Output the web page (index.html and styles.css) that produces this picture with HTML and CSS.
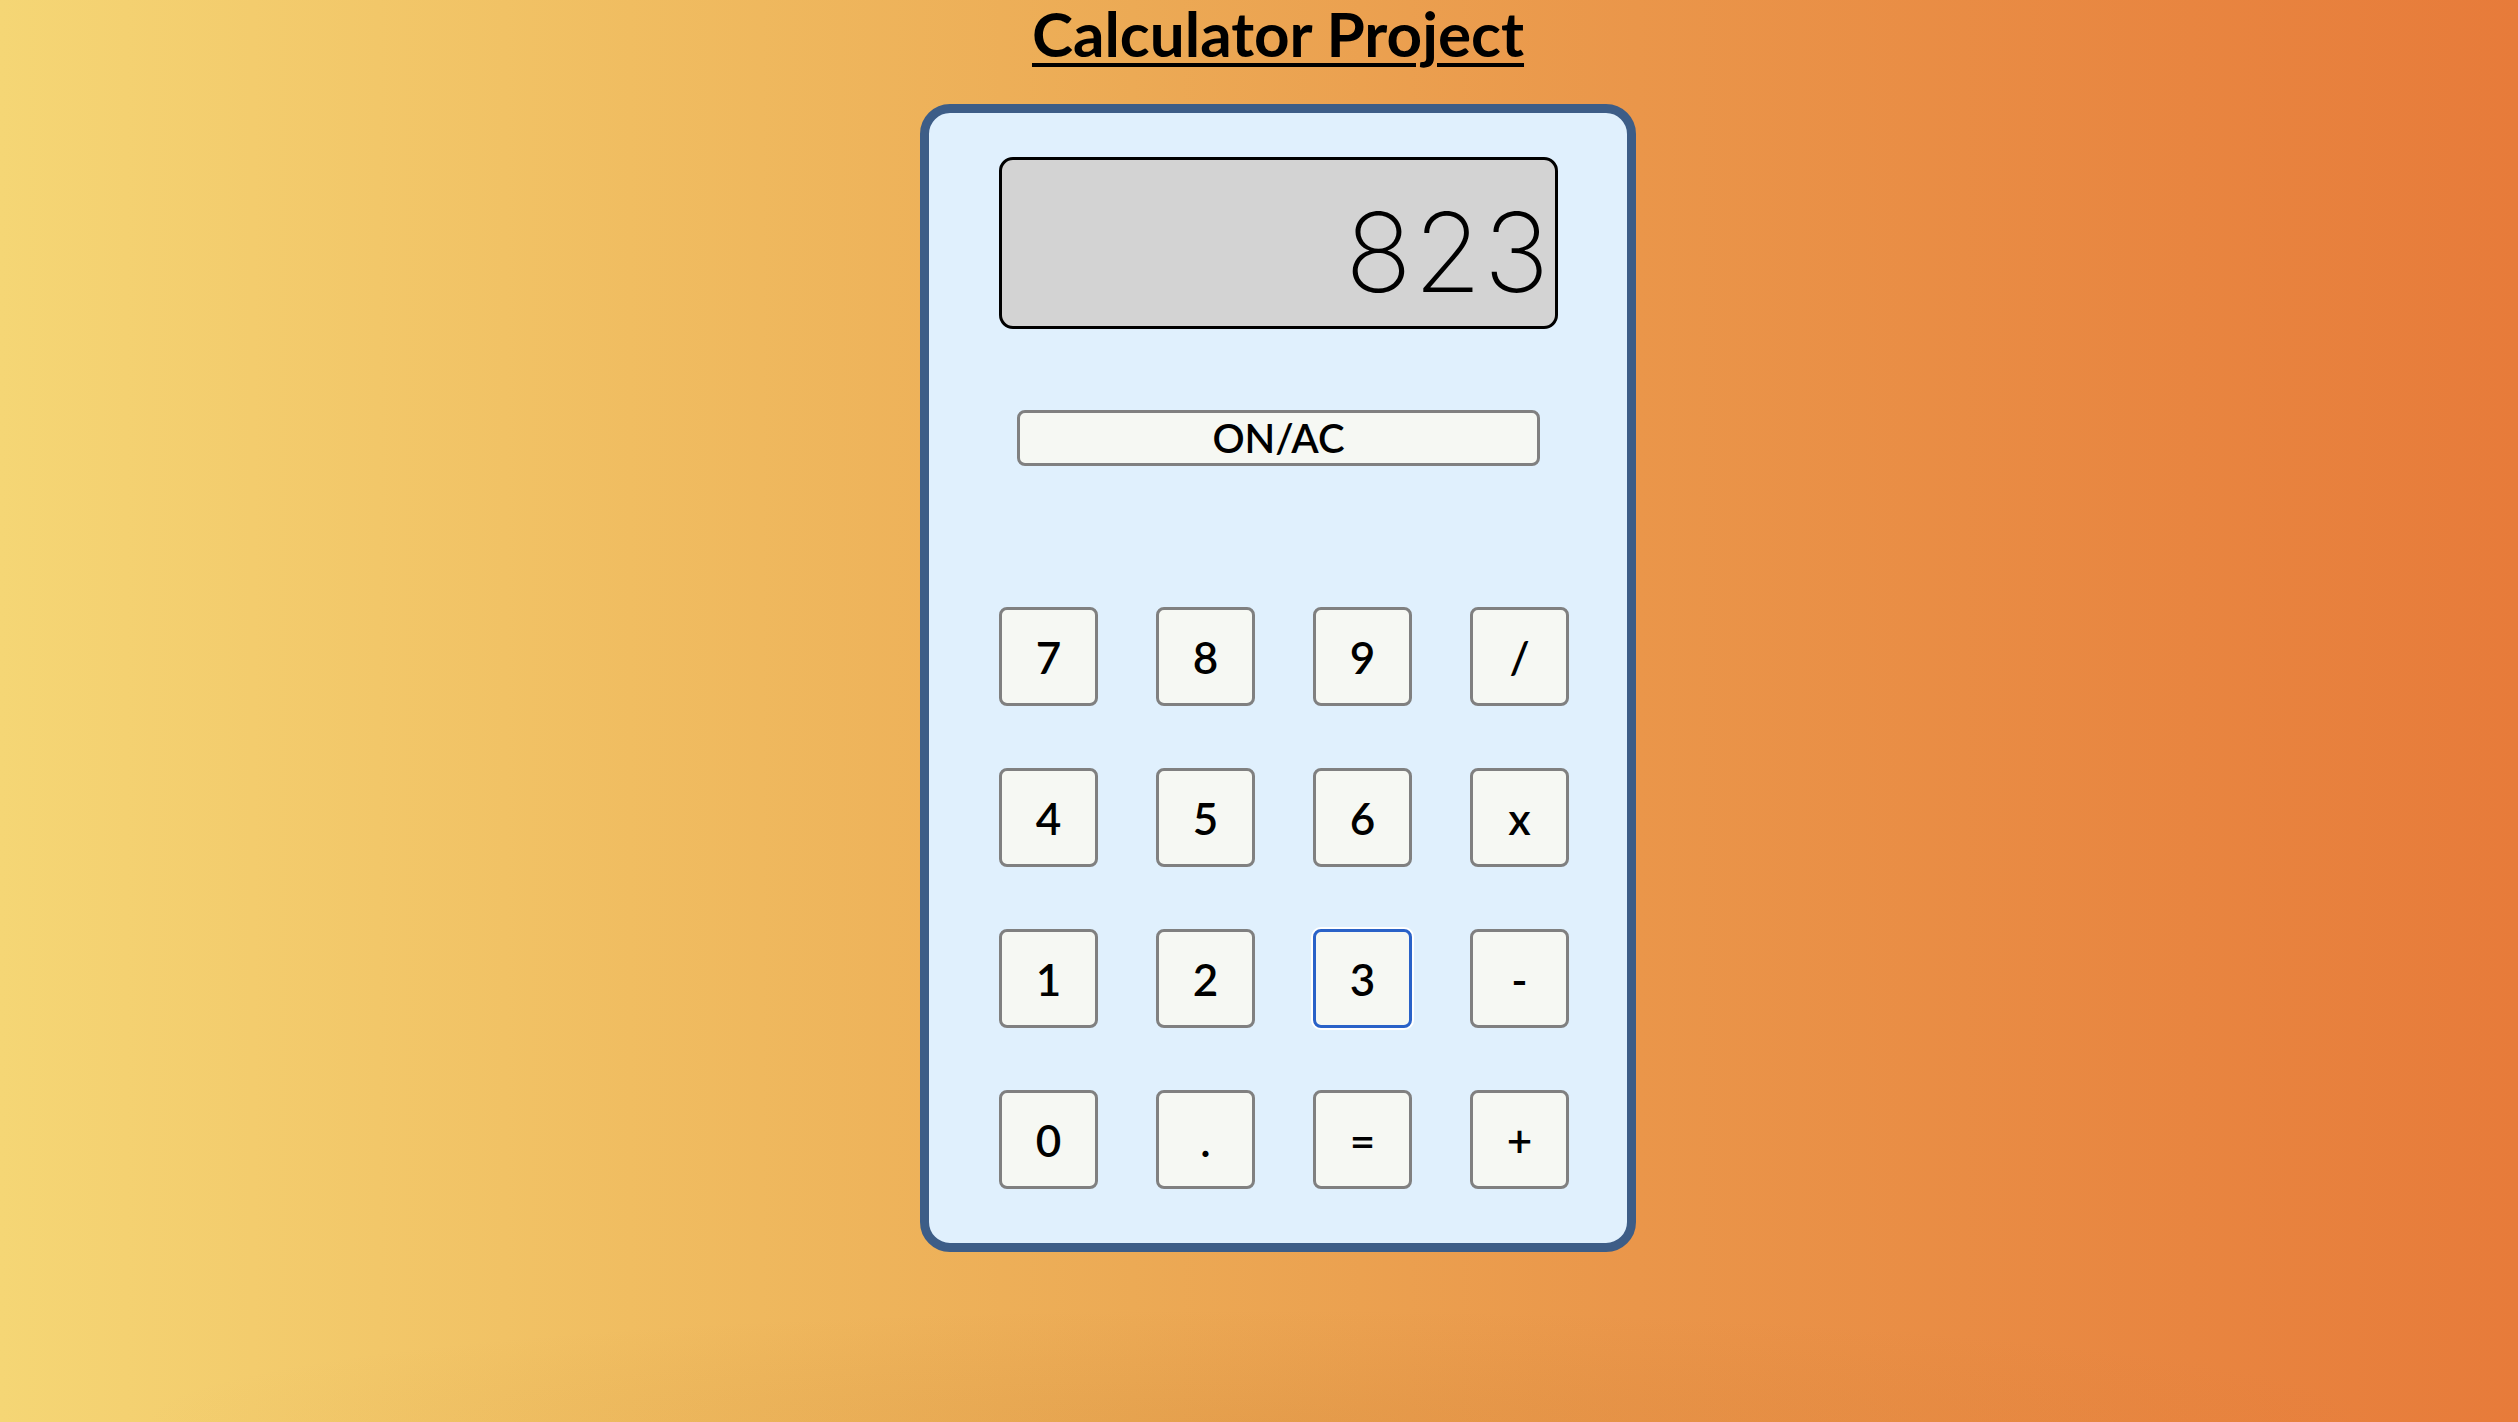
FILE: index.html
```html
<!DOCTYPE html>
<html lang="en">
<head>
<meta charset="utf-8">
<title>Calculator Project</title>
<link rel="stylesheet" href="styles.css">
</head>
<body>
<div class="page">
  <h1 class="title">Calculator Project</h1>
  <div class="calc">
    <div class="screen"><span class="screen-value">823</span></div>
    <button class="btn onac">ON/AC</button>
    <div class="keys">
      <button class="btn key">7</button>
      <button class="btn key">8</button>
      <button class="btn key">9</button>
      <button class="btn key">/</button>
      <button class="btn key">4</button>
      <button class="btn key">5</button>
      <button class="btn key">6</button>
      <button class="btn key">x</button>
      <button class="btn key">1</button>
      <button class="btn key">2</button>
      <button class="btn key focused">3</button>
      <button class="btn key">-</button>
      <button class="btn key">0</button>
      <button class="btn key">.</button>
      <button class="btn key">=</button>
      <button class="btn key">+</button>
    </div>
  </div>
</div>
</body>
</html>
```
FILE: styles.css
```css
html, body {
  margin: 0;
  height: 100%;
}
body {
  background:
    radial-gradient(ellipse 45% 8% at 50% 100%, rgba(170, 90, 20, 0.10), rgba(170, 90, 20, 0) 100%),
    linear-gradient(90deg, #f5d675 0%, #f0bd61 25%, #ecaa55 45%, #ea964a 65%, #e77b3a 100%);
  font-family: Lato, "Open Sans", sans-serif;
  color: #000;
  overflow: hidden;
}
.page {
  padding-left: 38px;
  display: flex;
  flex-direction: column;
  align-items: center;
}
.title {
  margin: 0;
  font-size: 62px;
  line-height: 66px;
  font-weight: 700;
  text-decoration: underline;
  text-decoration-thickness: 4px;
  text-underline-offset: 6px;
}
.calc {
  margin-top: 38px;
  width: 716px;
  height: 1148px;
  box-sizing: border-box;
  border: 9px solid #3d5d87;
  border-radius: 30px;
  background: #e0f0fd;
  padding: 44px 0 0 70px;
  display: flex;
  flex-direction: column;
}
.screen {
  width: 559px;
  height: 172px;
  box-sizing: border-box;
  border: 3px solid #000;
  border-radius: 14px;
  background: #d3d3d3;
  display: flex;
  align-items: center;
  justify-content: flex-end;
  padding: 18px 4px 0 0;
}
.screen-value {
  font-family: Inter, "DejaVu Sans", sans-serif;
  font-weight: 200;
  font-size: 110px;
  letter-spacing: 2px;
  line-height: 1;
}
.btn {
  font-family: Lato, "Open Sans", sans-serif;
  font-weight: 600;
  background: #f6f8f3;
  border: 3px solid #808080;
  border-radius: 8px;
  color: #000;
  padding: 0;
  margin: 0;
}
.onac {
  margin: 81px 0 0 18px;
  width: 523px;
  height: 56px;
  font-size: 40px;
  line-height: 1;
}
.keys {
  margin-top: 141px;
  display: grid;
  grid-template-columns: repeat(4, 99px);
  grid-auto-rows: 99px;
  column-gap: 58px;
  row-gap: 62px;
}
.key {
  font-size: 44px;
  line-height: 1;
}
.key.focused {
  border-color: #2a62c8;
  box-shadow: 0 0 0 2px #ffffff;
}
```
